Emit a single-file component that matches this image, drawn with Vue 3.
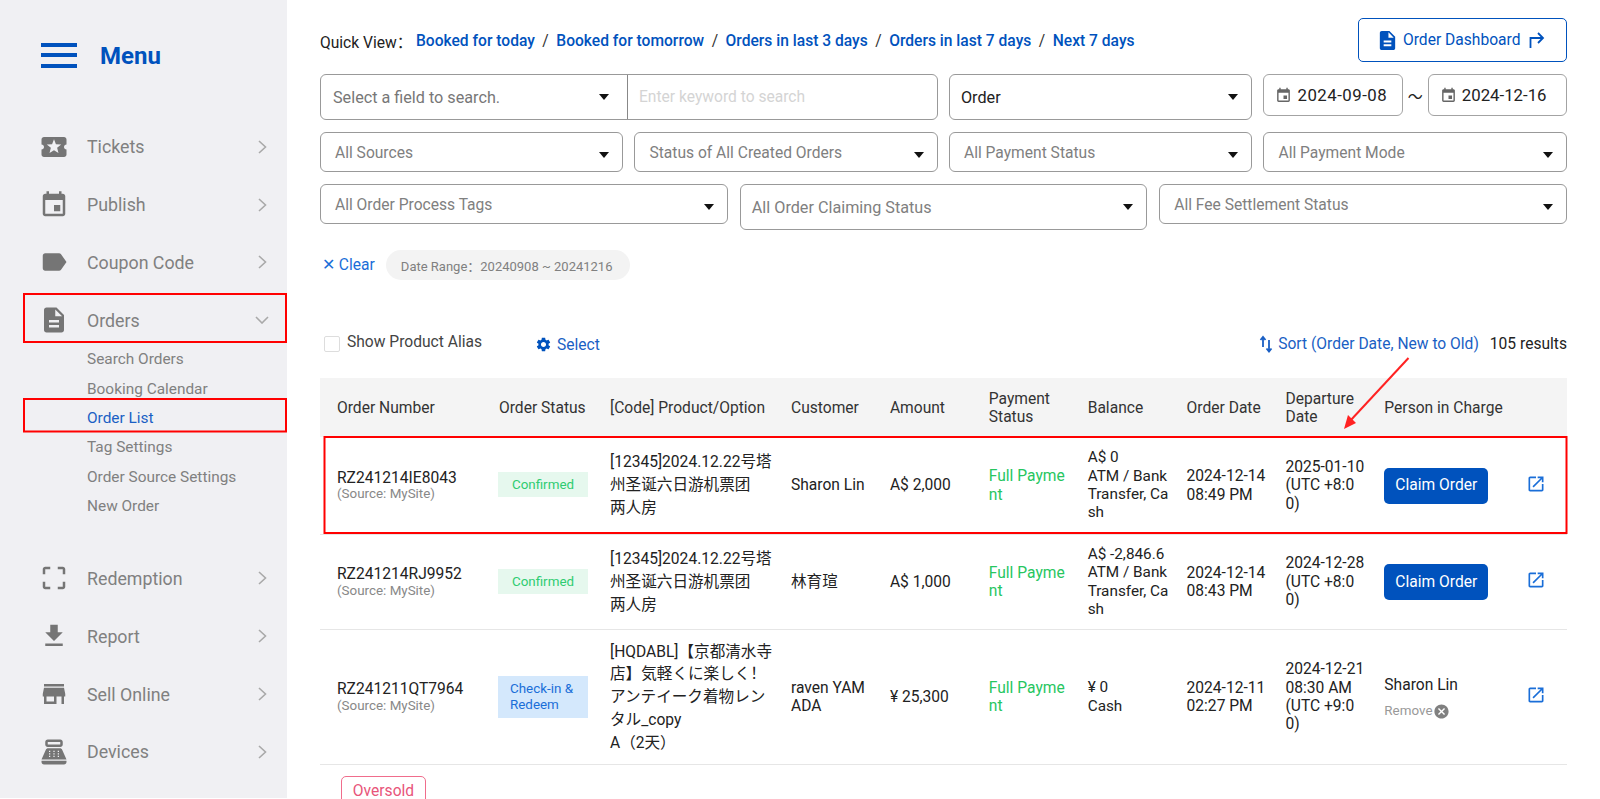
<script setup>
const navTop = [
  { label: 'Tickets', d: 'M20 12c0-1.1.9-2 2-2V6c0-1.1-.9-2-2-2H4c-1.1 0-1.99.9-1.99 2v4c1.1 0 1.99.9 1.99 2s-.89 2-2 2v4c0 1.1.9 2 2 2h16c1.1 0 2-.9 2-2v-4c-1.1 0-2-.9-2-2zm-4.42 4.8L12 14.5l-3.58 2.3 1.08-4.12-3.29-2.69 4.24-.25L12 5.8l1.54 3.95 4.24.25-3.29 2.69 1.09 4.11z' },
  { label: 'Publish', d: 'M17 12h-5v5h5v-5zM16 1v2H8V1H6v2H5c-1.11 0-1.99.9-1.99 2L3 19c0 1.1.89 2 2 2h14c1.1 0 2-.9 2-2V5c0-1.1-.9-2-2-2h-1V1h-2zm3 18H5V8h14v11z' },
  { label: 'Coupon Code', d: 'M17.63 5.84C17.27 5.33 16.67 5 16 5L5 5.01C3.9 5.01 3 5.9 3 7v10c0 1.1.9 1.99 2 1.99L16 19c.67 0 1.27-.33 1.63-.84L22 12l-4.37-6.16z' },
  { label: 'Orders', open: true, d: 'M14 2H6c-1.1 0-1.99.9-1.99 2L4 20c0 1.1.89 2 1.99 2H18c1.1 0 2-.9 2-2V8l-6-6zm2 16H8v-2h8v2zm0-4H8v-2h8v2zm-3-5V3.5L18.5 9H13z' }
]
const subItems = ['Search Orders', 'Booking Calendar', 'Order List', 'Tag Settings', 'Order Source Settings', 'New Order']
const navBottom = [
  { label: 'Redemption', d: 'M3 5v4h2V5h4V3H5c-1.1 0-2 .9-2 2zm2 10H3v4c0 1.1.9 2 2 2h4v-2H5v-4zm14 4h-4v2h4c1.1 0 2-.9 2-2v-4h-2v4zm0-16h-4v2h4v4h2V5c0-1.1-.9-2-2-2z' },
  { label: 'Report', d: 'M19 9h-4V3H9v6H5l7 7 7-7zM5 18v2h14v-2H5z' },
  { label: 'Sell Online', d: 'M20 4H4v2h16V4zm1 10v-2l-1-5H4l-1 5v2h1v6h10v-6h4v6h2v-6h1zm-9 4H6v-4h6v4z' },
  { label: 'Devices', d: 'M17 2H7c-1.1 0-2 .9-2 2v2c0 1.1.9 2 2 2h10c1.1 0 2-.9 2-2V4c0-1.1-.9-2-2-2zm0 4H7V4h10v2zm3 16H4c-1.1 0-2-.9-2-2v-1h20v1c0 1.1-.9 2-2 2zm-1.47-11.81C18.21 9.47 17.49 9 16.7 9H7.3c-.79 0-1.51.47-1.83 1.19L2 18h20l-3.47-7.81zM9 16H8v-1h1v1zm0-2H8v-1h1v1zm0-2H8v-1h1v1zm3.5 4h-1v-1h1v1zm0-2h-1v-1h1v1zm0-2h-1v-1h1v1zm3.5 4h-1v-1h1v1zm0-2h-1v-1h1v1zm0-2h-1v-1h1v1z' }
]
const quick = ['Booked for today', 'Booked for tomorrow', 'Orders in last 3 days', 'Orders in last 7 days', 'Next 7 days']
const row2 = ['All Sources', 'Status of All Created Orders', 'All Payment Status', 'All Payment Mode']
const event = 'M17 12h-5v5h5v-5zM16 1v2H8V1H6v2H5c-1.11 0-1.99.9-1.99 2L3 19c0 1.1.89 2 2 2h14c1.1 0 2-.9 2-2V5c0-1.1-.9-2-2-2h-1V1h-2zm3 18H5V8h14v11z'
const doc = 'M14 2H6c-1.1 0-1.99.9-1.99 2L4 20c0 1.1.89 2 1.99 2H18c1.1 0 2-.9 2-2V8l-6-6zm2 16H8v-2h8v2zm0-4H8v-2h8v2zm-3-5V3.5L18.5 9H13z'
const heads = ['Order Number', 'Order Status', '[Code] Product/Option', 'Customer', 'Amount', 'Payment Status', 'Balance', 'Order Date', 'Departure Date', 'Person in Charge', '']
const rows = [
  { cls: 'r1', no: 'RZ241214IE8043', status: 'Confirmed', kind: 'ok', product: ['[12345]2024.12.22号塔州圣诞六日游机票团', '两人房'], customer: 'Sharon Lin', amount: 'A$ 2,000', balance: ['A$ 0', 'ATM / Bank Transfer, Cash'], date: ['2024-12-14', '08:49 PM'], dep: ['2025-01-10', '(UTC +8:00)'], claim: true },
  { cls: 'r2', no: 'RZ241214RJ9952', status: 'Confirmed', kind: 'ok', product: ['[12345]2024.12.22号塔州圣诞六日游机票团', '两人房'], customer: '林育瑄', amount: 'A$ 1,000', balance: ['A$ -2,846.6', 'ATM / Bank Transfer, Cash'], date: ['2024-12-14', '08:43 PM'], dep: ['2024-12-28', '(UTC +8:00)'], claim: true },
  { cls: 'r3', no: 'RZ241211QT7964', status: 'Check-in & Redeem', kind: 'info', product: ['[HQDABL]【京都清水寺店】気軽くに楽しく！アンテイーク着物レンタル_copy', 'A（2天）'], customer: 'raven YAMADA', amount: '¥ 25,300', balance: ['¥ 0', 'Cash'], date: ['2024-12-11', '02:27 PM'], dep: ['2024-12-21', '08:30 AM', '(UTC +9:00)'], claim: false }
]
</script>

<template>
  <div class="page">
    <aside class="side">
      <div class="brand">
        <div class="burger"><i></i><i></i><i></i></div>
        <span class="brand-text">Menu</span>
      </div>
      <div v-for="n in navTop" :key="n.label" class="nav">
        <svg class="nav-ic" viewBox="0 0 24 24"><path :d="n.d" /></svg>
        <span class="nav-label">{{ n.label }}</span>
        <svg v-if="n.open" class="chev-d" viewBox="0 0 14 8"><path d="M1 1l6 6 6-6" /></svg>
        <svg v-else class="chev" viewBox="0 0 9 14"><path d="M1 1l6.500 6-6.500 6" /></svg>
      </div>
      <div class="subs">
        <div v-for="s in subItems" :key="s" class="sub" :class="{ active: s === 'Order List' }">{{ s }}</div>
      </div>
      <div v-for="n in navBottom" :key="n.label" class="nav">
        <svg class="nav-ic" viewBox="0 0 24 24"><path :d="n.d" /></svg>
        <span class="nav-label">{{ n.label }}</span>
        <svg class="chev" viewBox="0 0 9 14"><path d="M1 1l6.500 6-6.500 6" /></svg>
      </div>
    </aside>

    <main class="main">
      <div class="quick">
        <span class="q-label">Quick View：</span>
        <template v-for="(q, i) in quick" :key="q">
          <span v-if="i" class="q-sep">/</span>
          <a class="q-link">{{ q }}</a>
        </template>
        <button class="dash">
          <svg class="dash-doc" viewBox="0 0 24 24"><path :d="doc" /></svg>
          <span>Order Dashboard</span>
          <svg class="dash-go" viewBox="0 0 18 18"><path d="M2.500 17V7h12M10 2l5 5-5 5" /></svg>
        </button>
      </div>

      <div class="grid r-a">
        <div class="box search">
          <div class="s-left"><span class="ph-dark">Select a field to search.</span><i class="tri tri-s"></i></div>
          <div class="s-right">Enter keyword to search</div>
        </div>
        <div class="box sel-a"><span class="val">Order</span><i class="tri"></i></div>
        <div class="dates">
          <div class="date">
            <svg class="cal" viewBox="0 0 24 24"><path :d="event" /></svg>2024-09-08
          </div>
          <span class="tilde">～</span>
          <div class="date date-b">
            <svg class="cal" viewBox="0 0 24 24"><path :d="event" /></svg>2024-12-16
          </div>
        </div>
      </div>

      <div class="grid r-b">
        <div v-for="f in row2" :key="f" class="box sel-b"><span class="ph">{{ f }}</span><i class="tri low"></i></div>
      </div>

      <div class="r-c">
        <div class="box sel-b"><span class="ph">All Order Process Tags</span><i class="tri low"></i></div>
        <div class="box sel-c"><span class="ph ph-lg">All Order Claiming Status</span><i class="tri"></i></div>
        <div class="box sel-b"><span class="ph">All Fee Settlement Status</span><i class="tri low"></i></div>
      </div>

      <div class="chips">
        <span class="clear">✕ Clear</span>
        <span class="chip">Date Range：20240908 ~ 20241216</span>
      </div>

      <div class="tools">
        <span class="check"></span>
        <span class="alias">Show Product Alias</span>
        <span class="select">
          <svg class="gear" viewBox="0 0 24 24"><path d="M19.140 12.940c.04-.3.06-.61.06-.94 0-.32-.02-.64-.07-.94l2.030-1.580c.18-.14.23-.41.12-.61l-1.920-3.320c-.12-.22-.37-.29-.59-.22l-2.390.96c-.5-.38-1.030-.7-1.620-.94l-.36-2.540c-.04-.24-.24-.41-.48-.41h-3.840c-.24 0-.43.17-.47.41l-.36 2.540c-.59.24-1.130.57-1.620.94l-2.390-.96c-.22-.08-.47 0-.59.22L2.740 8.870c-.12.21-.08.47.12.61l2.030 1.580c-.05.3-.09.63-.09.94s.02.64.07.94l-2.030 1.580c-.18.14-.23.41-.12.61l1.920 3.320c.12.22.37.29.59.22l2.390-.96c.5.38 1.030.7 1.620.94l.36 2.540c.05.24.24.41.48.41h3.840c.24 0 .44-.17.47-.41l.36-2.540c.59-.24 1.130-.56 1.620-.94l2.390.96c.22.08.47 0 .59-.22l1.920-3.320c.12-.22.07-.47-.12-.61l-2.010-1.580zM12 15.600c-1.980 0-3.600-1.620-3.600-3.600s1.620-3.600 3.600-3.600 3.600 1.620 3.600 3.600-1.620 3.600-3.600 3.600z" /></svg>
          Select
        </span>
        <span class="sort">
          <svg class="sort-ic" viewBox="0 0 14 18"><path d="M4 12V2.500M1.500 5L4 2l2.500 3M10 5v11M7.500 13.500L10 16.500l2.500-3" /></svg>
          Sort (Order Date, New to Old)
        </span>
        <span class="count">105 results</span>
      </div>

      <table class="tbl">
        <colgroup>
          <col class="c-no" /><col class="c-st" /><col class="c-pr" />
          <col class="c-n" /><col class="c-n" /><col class="c-n" /><col class="c-n" /><col class="c-n" /><col class="c-n" />
          <col class="c-pe" /><col class="c-ac" />
        </colgroup>
        <thead>
          <tr><th v-for="(h, i) in heads" :key="i">{{ h }}</th></tr>
        </thead>
        <tbody>
          <tr v-for="r in rows" :key="r.no" :class="r.cls">
            <td class="nw">
              <div>{{ r.no }}</div>
              <div class="src">(Source: MySite)</div>
            </td>
            <td><div class="badge" :class="r.kind">{{ r.status }}</div></td>
            <td class="prod"><div v-for="p in r.product" :key="p">{{ p }}</div></td>
            <td>{{ r.customer }}</td>
            <td class="nw">{{ r.amount }}</td>
            <td class="pay">Full Payment</td>
            <td class="bal"><div v-for="b in r.balance" :key="b">{{ b }}</div></td>
            <td class="nw"><div v-for="d in r.date" :key="d">{{ d }}</div></td>
            <td><div v-for="d in r.dep" :key="d">{{ d }}</div></td>
            <td class="nw">
              <button v-if="r.claim" class="claim">Claim Order</button>
              <template v-else>
                <div class="owner">Sharon Lin</div>
                <div class="remove">Remove
                  <svg class="rm-ic" viewBox="0 0 24 24"><path d="M12 2C6.470 2 2 6.470 2 12s4.470 10 10 10 10-4.470 10-10S17.530 2 12 2zm5 13.590L15.590 17 12 13.410 8.410 17 7 15.590 10.590 12 7 8.410 8.410 7 12 10.590 15.590 7 17 8.410 13.410 12 17 15.590z" /></svg>
                </div>
              </template>
            </td>
            <td class="act">
              <svg class="open" viewBox="0 0 24 24"><path d="M19 19H5V5h7V3H5c-1.110 0-2 .9-2 2v14c0 1.100.89 2 2 2h14c1.100 0 2-.9 2-2v-7h-2v7zM14 3v2h3.590l-9.830 9.830 1.410 1.410L19 6.410V10h2V3h-7z" /></svg>
            </td>
          </tr>
        </tbody>
      </table>
      <div class="tag">Oversold</div>
    </main>

    <svg class="marks" viewBox="0 0 1600 799">
      <rect x="24" y="294" width="262" height="48" />
      <rect x="24" y="399" width="262" height="32.500" />
      <rect x="324.500" y="437" width="1242" height="96" />
      <line x1="1408.500" y1="358" x2="1350" y2="421" />
      <polygon class="head" points="1344,429 1348,415 1356,423" />
    </svg>
  </div>
</template>

<style>
html, body { margin: 0; overflow: hidden; background: #fff; }
</style>

<style scoped>
.page {
  position: relative;
  display: flex;
  width: 1600px;
  height: 799px;
  overflow: hidden;
  font-family: Roboto, "Noto Sans CJK SC", sans-serif;
  font-size: 15.6px;
  color: #222;
  background: #fff;
}
.side {
  flex: 0 0 287px;
  height: 798px;
  background: #f0f0f3;
  box-sizing: border-box;
  padding-left: 38.5px;
}
.brand { display: flex; align-items: center; height: 110px; margin-bottom: 8px; }
.burger { display: flex; flex-direction: column; gap: 6.500px; width: 36px; margin-left: 2.5px; margin-right: 23px; }
.burger i { display: block; height: 4px; background: #0052bd; }
.brand-text { font-size: 24px; font-weight: 700; color: #0052bd; padding-top: 2px; }
.nav { display: flex; align-items: center; height: 57.8px; color: #808080; }
.nav-ic { width: 30px; height: 30px; fill: #757575; margin-right: 18.5px; flex: none; }
.nav-label { font-size: 17.8px; flex: 1; }
.chev { width: 9px; height: 14px; margin-right: 20px; fill: none; stroke: #a9a9a9; stroke-width: 1.6; }
.chev-d { width: 14px; height: 8px; margin-right: 18px; fill: none; stroke: #a9a9a9; stroke-width: 1.6; }
.subs { margin: -4px 0 28px; padding-left: 48.5px; }
.sub { height: 29.4px; line-height: 29.4px; font-size: 15.400px; color: #808080; }
.sub.active { color: #1a5fc4; }

.main { flex: 1; min-width: 0; padding: 18px 33px 0; }
.quick { display: flex; align-items: center; height: 44px; }
.q-label { width: 96px; padding-top: 2px; color: #222; white-space: nowrap; }
.q-link { padding-top: 2px; font-weight: 500; color: #0052bd; }
.q-sep { padding-top: 2px; margin: 0 7.500px; color: #333; }
.dash {
  display: flex; align-items: center; margin-left: auto; width: 209px; height: 44px;
  box-sizing: border-box; padding: 0 0 0 17px; border: 1.5px solid #0052bd; border-radius: 5px;
  background: #fff; color: #0052bd; font: inherit;
}
.dash-doc { width: 23px; height: 23px; fill: #0052bd; margin-right: 4px; flex: none; }
.dash-go { width: 18px; height: 18px; margin-left: 7px; fill: none; stroke: #0052bd; stroke-width: 1.8; }

.grid { display: grid; grid-template-columns: 303.2px 303.2px 303.2px 303.7px; column-gap: 11.3px; }
.r-a { margin-top: 12px; align-items: start; }
.r-b { margin-top: 12px; }
.r-c { display: grid; grid-template-columns: 407.800px 1fr 407.800px; gap: 12px; align-items: start; margin-top: 12px; }
.box {
  position: relative; box-sizing: border-box; display: flex; align-items: center;
  border: 1.5px solid #999; border-radius: 6px; background: #fff; font-size: 16.200px;
}
.search { grid-column: span 2; height: 46px; }
.s-left { position: relative; display: flex; align-items: center; width: 307px; height: 100%; padding-left: 12px; box-sizing: border-box; border-right: 1px solid #888; }
.s-right { padding-left: 11px; color: #d4d4d4; font-size: 15.6px; }
.ph-dark { color: #777; }
.sel-a { height: 46px; padding-left: 11px; }
.val { color: #222; }
.sel-b { height: 40px; padding-left: 14px; padding-top: 1px; }
.sel-c { height: 46px; padding-left: 11px; }
.ph { color: #808080; font-size: 15.6px; }
.ph-lg { font-size: 16.200px; }
.tri { position: absolute; right: 13px; top: 50%; width: 0; height: 0; margin-top: -3px; border-left: 5.500px solid transparent; border-right: 5.500px solid transparent; border-top: 6px solid #111; }
.tri.low { margin-top: 0; }
.tri.tri-s { right: 18px; }
.dates { display: flex; align-items: center; }
.date {
  display: flex; align-items: center; flex: 1; height: 42px; box-sizing: border-box;
  padding-left: 11px; border: 1.5px solid #a3a3a3; border-radius: 6px; font-size: 16.800px; letter-spacing: .5px; color: #222;
}
.date-b { letter-spacing: 0; }
.cal { width: 17px; height: 17px; fill: #666; margin-right: 5px; flex: none; }
.tilde { flex: none; width: 25px; text-align: center; font-size: 15px; }

.chips { display: flex; align-items: center; height: 30px; margin-top: 20px; }
.clear { margin-left: 2px; color: #1a6ed8; }
.chip {
  display: flex; align-items: center; height: 30px; margin-left: 11px; padding: 0 11px 0 15px; box-sizing: border-box;
  width: 244px; border-radius: 15px; background: #f3f3f3; color: #808080; font-size: 13px; white-space: nowrap;
}
.tools { display: flex; align-items: center; height: 22px; margin-top: 53px; }
.check { width: 14px; height: 14px; margin-left: 3.500px; border: 1.5px solid #ddd; border-radius: 2px; }
.alias { margin-left: 7.500px; margin-bottom: 4px; color: #444; }
.select { display: flex; align-items: center; margin-left: 53px; padding-top: 1px; color: #1a5fc4; }
.gear { width: 17px; height: 17px; fill: #0052bd; margin-right: 5px; }
.sort { display: flex; align-items: center; margin-left: auto; color: #1a5fc4; margin-bottom: 1px; }
.sort-ic { width: 14px; height: 18px; margin-right: 5px; fill: none; stroke: #1a5fc4; stroke-width: 1.800; }
.count { margin-left: 11px; color: #222; }

.tbl { width: 1247px; margin-top: 23px; table-layout: fixed; border-collapse: separate; border-spacing: 0; }
.c-no { width: 162px; }
.c-st { width: 111px; }
.c-pr { width: 181px; }
.c-n { width: 98.9px; }
.c-pe { width: 146.6px; }
.c-ac { width: 53px; }
th {
  height: 59px; padding: 1px 4px 0 17px; background: #f4f4f4; box-sizing: border-box;
  font-weight: 400; font-size: 15.6px; line-height: 18.5px; text-align: left; color: #333;
}
td {
  padding: 0 0 0 17px; box-sizing: border-box; border-bottom: 1.5px solid #e6e6e6; line-height: 18.4px;
  vertical-align: middle; word-break: break-all; color: #222;
}
.r1 td { height: 98px; }
.r2 td { height: 95px; }
.r3 td { height: 135px; }
.nw { white-space: nowrap; }
.src { margin-top: -1px; font-size: 13.400px; line-height: 16px; color: #888; }
.prod { line-height: 23px; }
.r3 .prod { padding-top: 1px; line-height: 22.800px; }
.bal { padding-bottom: 1px; font-size: 15.300px; }
.badge {
  box-sizing: border-box; width: 90px; margin-left: -1px; font-size: 13.400px; line-height: 17px; word-break: normal;
}
.badge.ok { margin-bottom: 2px; background: #e6f8ee; color: #2ecc71; text-align: center; padding: 4px 0; }
.badge.info { background: #d4e8fc; color: #1a6ed8; padding: 4.500px 11px 4.500px 12px; line-height: 16.500px; }
.pay { color: #27c65f; }
.claim {
  display: block; width: 104px; height: 36px; border: 0; border-radius: 5px; background: #0052bd; color: #fff; font: inherit; padding: 0;
}
.owner { line-height: 20px; }
.remove { display: flex; align-items: center; margin-top: 8px; font-size: 13.400px; line-height: 16px; color: #999; }
.rm-ic { width: 17px; height: 17px; margin-left: 1px; fill: #808080; }
.act { padding: 0 0 4px 12px; }
.open { display: block; width: 20px; height: 20px; fill: #1a6ed8; }
.tag {
  display: inline-flex; align-items: center; justify-content: center; box-sizing: border-box; width: 85px; height: 30px;
  margin: 11px 0 0 21px; border: 1px solid #f06d8c; border-radius: 5px; color: #e8557a; font-size: 15.6px;
}
.marks { position: absolute; left: 0; top: 0; width: 1600px; height: 799px; pointer-events: none; }
.marks rect { fill: none; stroke: #f00; stroke-width: 2; }
.marks line { stroke: #f22; stroke-width: 2; }
.marks .head { fill: #f22; }
</style>
